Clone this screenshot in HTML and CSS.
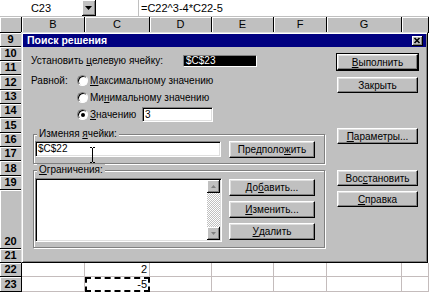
FILE: index.html
```html
<!DOCTYPE html>
<html lang="ru">
<head>
    <meta charset="UTF-8">
    <meta name="viewport" content="width=device-width, initial-scale=1.0">
    <title>Поиск решения</title>
    <link rel="stylesheet" href="styles.css">
</head>
<body>
    <div class="formula-bar">
        <div class="name-box">C23</div>
        <div class="name-drop">
            <svg width="7" height="4" viewBox="0 0 7 4"><path d="M0 0H7L3.5 4Z" fill="#000"/></svg>
        </div>
        <div class="formula-tools"></div>
        <div class="formula">=C22^3-4*C22-5</div>
    </div>

    <div class="sheet">
        <div class="row head-row">
            <div class="corner"></div>
            <div class="ch col-b">B</div>
            <div class="ch col-c">C</div>
            <div class="ch col-d">D</div>
            <div class="ch col-e">E</div>
            <div class="ch col-f">F</div>
            <div class="ch col-g">G</div>
            <div class="ch col-h"></div>
        </div>
        <div class="row"><div class="rh">9</div><div class="fill"></div></div>
        <div class="row"><div class="rh">10</div><div class="fill"></div></div>
        <div class="row"><div class="rh">11</div><div class="fill"></div></div>
        <div class="row h15"><div class="rh">12</div><div class="fill"></div></div>
        <div class="row"><div class="rh">13</div><div class="fill"></div></div>
        <div class="row"><div class="rh">14</div><div class="fill"></div></div>
        <div class="row h15"><div class="rh">15</div><div class="fill"></div></div>
        <div class="row"><div class="rh">16</div><div class="fill"></div></div>
        <div class="row"><div class="rh">17</div><div class="fill"></div></div>
        <div class="row h15"><div class="rh">18</div><div class="fill"></div></div>
        <div class="row"><div class="rh">19</div><div class="fill"></div></div>
        <div class="row h59"><div class="rh">20</div><div class="fill"></div></div>
        <div class="row"><div class="rh">21</div><div class="fill"></div></div>
        <div class="row">
            <div class="rh">22</div>
            <div class="cell col-b"></div>
            <div class="cell col-c num">2</div>
            <div class="cell col-d"></div>
            <div class="cell col-e"></div>
            <div class="cell col-f"></div>
            <div class="cell col-g"></div>
            <div class="cell col-h"></div>
        </div>
        <div class="row h15">
            <div class="rh">23</div>
            <div class="cell col-b"></div>
            <div class="cell col-c num marquee">-5</div>
            <div class="cell col-d"></div>
            <div class="cell col-e"></div>
            <div class="cell col-f"></div>
            <div class="cell col-g"></div>
            <div class="cell col-h"></div>
        </div>
    </div>

    <div class="dialog">
        <div class="title-bar">
            <span>Поиск решения</span>
            <div class="close-btn">
                <svg width="8" height="7" viewBox="0 0 8 7"><path d="M1.5 1L6.5 6M6.5 1L1.5 6" stroke="#000" stroke-width="1.6"/></svg>
            </div>
        </div>

        <div class="dialog-body">
            <div class="main-col">
                <div class="target-row">
                    <span class="target-label">Установить <u>ц</u>елевую ячейку:</span>
                    <div class="ref-box">$C$23</div>
                </div>

                <div class="equal-row">
                    <span class="equal-label">Равной:</span>
                    <div class="radio-list">
                        <div class="radio-item"><span class="radio"></span><span><u>М</u>аксимальному значению</span></div>
                        <div class="radio-item"><span class="radio"></span><span>Ми<u>н</u>имальному значению</span></div>
                        <div class="radio-item">
                            <span class="radio checked"></span>
                            <span class="value-label"><u>З</u>начению</span>
                            <div class="text-box value-box">3</div>
                        </div>
                    </div>
                </div>

                <fieldset class="group">
                    <legend>Изменяя <u>я</u>чейки:</legend>
                    <div class="group-row">
                        <div class="text-box cells-box">
                            $C$22
                            <svg class="ibeam" width="7" height="16" viewBox="0 0 7 16"><path d="M1 0.5H3M4 0.5H6M3.5 1V15M1 15.5H3M4 15.5H6" stroke="#000" stroke-width="1"/></svg>
                        </div>
                        <button class="btn mid-btn">Предполо<u>ж</u>ить</button>
                    </div>
                </fieldset>

                <fieldset class="group">
                    <legend><u>О</u>граничения:</legend>
                    <div class="group-row list-row">
                        <div class="list-box">
                            <div class="scrollbar">
                                <div class="scroll-btn">
                                    <svg width="5" height="3" viewBox="0 0 5 3"><path d="M2.5 0L5 3H0Z" fill="#808080"/></svg>
                                </div>
                                <div class="scroll-btn">
                                    <svg width="5" height="3" viewBox="0 0 5 3"><path d="M0 0H5L2.5 3Z" fill="#808080"/></svg>
                                </div>
                            </div>
                        </div>
                        <div class="btn-stack">
                            <button class="btn mid-btn">До<u>б</u>авить...</button>
                            <button class="btn mid-btn"><u>И</u>зменить...</button>
                            <button class="btn mid-btn"><u>У</u>далить</button>
                        </div>
                    </div>
                </fieldset>
            </div>

            <div class="side-col">
                <button class="btn side-btn default"><u>В</u>ыполнить</button>
                <button class="btn side-btn close-gap">Закрыть</button>
                <button class="btn side-btn options-gap"><u>П</u>араметры...</button>
                <button class="btn side-btn reset-gap">Вос<u>с</u>тановить</button>
                <button class="btn side-btn help-gap"><u>С</u>правка</button>
            </div>
        </div>
    </div>
</body>
</html>
```

FILE: styles.css
```css
* {
    box-sizing: border-box;
}
body {
    margin: 0;
    width: 429px;
    height: 292px;
    overflow: hidden;
    position: relative;
    background: #c0c0c0;
    font-family: "Liberation Sans", Arial, sans-serif;
    font-size: 11px;
    color: #000;
}

/* formula bar */
.formula-bar {
    display: flex;
    height: 17px;
    padding-bottom: 1px;
}
.name-box {
    width: 82px;
    background: #fff;
    text-align: center;
    line-height: 16px;
}
.name-drop {
    width: 14px;
    display: flex;
    align-items: center;
    justify-content: center;
    background: #c0c0c0;
    border-right: 1px solid #000;
    border-bottom: 1px solid #000;
    box-shadow: inset 1px 1px #fff, inset -1px -1px #808080;
}
.formula-tools {
    width: 43px;
    background: #fff;
    border-right: 1px solid #c0c0c0;
}
.formula {
    flex: 1;
    background: #fff;
    padding-left: 2px;
    line-height: 16px;
}

/* sheet */
.row {
    display: flex;
    height: 14px;
}
.row.h15 {
    height: 15px;
}
.row.h59 {
    height: 59px;
}
.head-row {
    height: 16px;
}
.corner,
.ch,
.rh {
    background: #c0c0c0;
    border-right: 1px solid #000;
    border-bottom: 1px solid #000;
    box-shadow: inset 1px 1px #fff;
}
.corner {
    width: 22px;
}
.ch {
    text-align: center;
    line-height: 15px;
}
.rh {
    width: 22px;
    display: flex;
    align-items: flex-end;
    justify-content: center;
    font-weight: bold;
    line-height: 13px;
}
.fill {
    flex: 1;
    background: #fff;
}
.col-b { width: 63px; }
.col-c { width: 65px; }
.col-d { width: 62px; }
.col-e { width: 62px; }
.col-f { width: 53px; }
.col-g { width: 75px; }
.col-h { flex: 1; }
.cell {
    background: #fff;
    border-right: 1px solid #c4bcbc;
    border-bottom: 1px solid #c4bcbc;
}
.num {
    text-align: right;
    padding-right: 2px;
    line-height: 13px;
}
.marquee {
    border: 2px dashed #000;
    line-height: 11px;
    padding-right: 1px;
}

/* dialog */
.dialog {
    position: absolute;
    left: 21px;
    top: 32px;
    width: 407px;
    height: 231px;
    padding: 1px;
    background: #c0c0c0;
    border: 1px solid;
    border-color: #dfdfdf #000 #000 #dfdfdf;
    box-shadow: inset 1px 1px #fff, inset -1px -1px #808080;
    font-size: 10px;
    line-height: 13px;
}
.title-bar {
    height: 13px;
    display: flex;
    align-items: center;
    justify-content: space-between;
    padding: 0 3px 0 4px;
    background: #000080;
    color: #fff;
    font-weight: bold;
    font-size: 10.5px;
}
.close-btn {
    width: 11px;
    height: 10px;
    display: flex;
    align-items: center;
    justify-content: center;
    background: #c0c0c0;
    border-right: 1px solid #000;
    border-bottom: 1px solid #000;
    box-shadow: inset 1px 1px #fff, inset -1px -1px #808080;
}
.dialog-body {
    display: flex;
    gap: 11px;
    padding: 7px 0 0 8px;
}
.main-col {
    width: 295px;
}
.side-col {
    width: 81px;
    display: flex;
    flex-direction: column;
}

.target-row {
    display: flex;
    align-items: center;
    height: 13px;
}
.target-label {
    width: 152px;
}
.ref-box {
    width: 74px;
    height: 12px;
    padding-left: 2px;
    line-height: 10px;
    background: #000;
    color: #fff;
    border: 1px solid;
    border-color: #808080 #fff #fff #808080;
}

.equal-row {
    display: flex;
    margin-top: 5px;
}
.equal-label {
    width: 46px;
    line-height: 17px;
}
.radio-list {
    display: flex;
    flex-direction: column;
}
.radio-item {
    display: flex;
    align-items: center;
    gap: 2px;
    height: 17px;
}
.radio {
    width: 11px;
    height: 11px;
    display: flex;
    align-items: center;
    justify-content: center;
    border-radius: 50%;
    background: #fff;
    border: 1px solid;
    border-color: #808080 #fff #fff #808080;
    box-shadow: inset 1px 1px #000;
}
.radio.checked::after {
    content: "";
    width: 4px;
    height: 4px;
    border-radius: 50%;
    background: #000;
}
.value-label {
    width: 50px;
}

.text-box {
    height: 16px;
    padding-left: 2px;
    line-height: 14px;
    background: #fff;
    border: 1px solid;
    border-color: #808080 #fff #fff #808080;
    box-shadow: inset 1px 1px #000, inset -1px -1px #dfdfdf;
}
.value-box {
    width: 71px;
    height: 15px;
    line-height: 13px;
}
.cells-box {
    position: relative;
    width: 186px;
}
.ibeam {
    position: absolute;
    left: 53px;
    top: 5px;
}

.group {
    width: 292px;
    min-width: 0;
    margin: 0 0 0 2px;
    padding: 0 1px 5px 1px;
    border: 1px solid #808080;
    box-shadow: inset 1px 1px #fff, 1px 1px #fff;
}
.equal-row + .group {
    margin-top: 5px;
}
.group legend {
    margin-left: 2px;
    padding: 0 2px;
    line-height: 12px;
    background: #c0c0c0;
}
.group-row {
    display: flex;
    align-items: center;
    gap: 8px;
    height: 18px;
}
.list-row {
    align-items: flex-start;
    gap: 7px;
    height: auto;
    padding-top: 2px;
}
.list-box {
    width: 187px;
    height: 64px;
    display: flex;
    justify-content: flex-end;
    padding: 1px;
    background: #fff;
    border: 1px solid;
    border-color: #808080 #fff #fff #808080;
    box-shadow: inset 1px 1px #000, inset -1px -1px #dfdfdf;
}
.scrollbar {
    width: 13px;
    display: flex;
    flex-direction: column;
    justify-content: space-between;
    background: repeating-conic-gradient(#fff 0 25%, #c0c0c0 0 50%) 0 0 / 2px 2px;
}
.scroll-btn {
    height: 13px;
    display: flex;
    align-items: center;
    justify-content: center;
    background: #c0c0c0;
    border-right: 1px solid #000;
    border-bottom: 1px solid #000;
    box-shadow: inset 1px 1px #fff, inset -1px -1px #808080;
}
.btn-stack {
    display: flex;
    flex-direction: column;
    gap: 5px;
    margin-top: 1px;
}

.btn {
    display: flex;
    align-items: center;
    justify-content: center;
    height: 17px;
    padding: 0;
    font: inherit;
    color: #000;
    background: #c0c0c0;
    border: 1px solid;
    border-color: #fff #000 #000 #fff;
    box-shadow: inset -1px -1px #808080, inset 1px 1px #dfdfdf;
}
.mid-btn {
    width: 86px;
}
.side-btn {
    width: 81px;
    height: 16px;
}
.btn.default {
    box-shadow: 0 0 0 1px #000, inset -1px -1px #808080, inset 1px 1px #dfdfdf;
}
.close-gap {
    margin-top: 7px;
}
.options-gap {
    margin-top: 35px;
}
.reset-gap {
    margin-top: 26px;
}
.help-gap {
    margin-top: 5px;
}
```
